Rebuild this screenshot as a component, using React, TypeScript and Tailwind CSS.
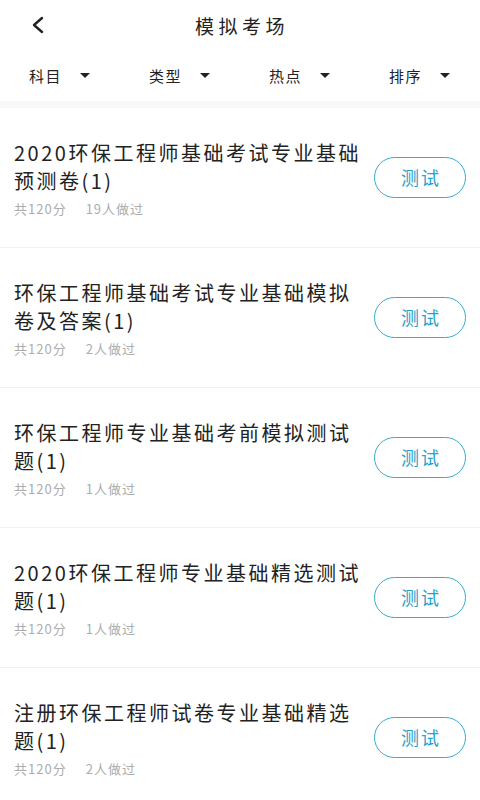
import React from "react";

const items = [
  { title: "2020环保工程师基础考试专业基础预测卷(1)", n: 19 },
  { title: "环保工程师基础考试专业基础模拟卷及答案(1)", n: 2 },
  { title: "环保工程师专业基础考前模拟测试题(1)", n: 1 },
  { title: "2020环保工程师专业基础精选测试题(1)", n: 1 },
  { title: "注册环保工程师试卷专业基础精选题(1)", n: 2 },
];

const filters = ["科目", "类型", "热点", "排序"];

export default function App() {
  return (
    <div
      className="w-[480px] h-[800px] bg-white overflow-hidden text-[#222]"
      style={{ fontFamily: '"Noto Sans CJK SC", "Noto Sans", sans-serif' }}
    >
      <div className="relative h-[50px] flex items-center justify-center">
        <svg
          className="absolute left-[31px] top-[16px]"
          width="14"
          height="18"
          viewBox="0 0 14 18"
          fill="none"
          stroke="#222"
          strokeWidth="2.4"
          strokeLinecap="round"
          strokeLinejoin="round"
        >
          <path d="M11 2 L3 9 L11 16" />
        </svg>
        <div className="text-[19px] tracking-[4.5px] pl-[4px] leading-none">模拟考场</div>
      </div>
      <div className="h-[51px] grid grid-cols-4">
        {filters.map((f) => (
          <div key={f} className="flex items-center pl-[29px]">
            <span className="text-[15px] tracking-[1.5px] leading-none">{f}</span>
            <svg className="ml-[18px]" width="10" height="5" viewBox="0 0 10 5">
              <path d="M0 0 L10 0 L5 5 Z" fill="#222" />
            </svg>
          </div>
        ))}
      </div>
      <div className="h-[7px] bg-[#f8f8f8]" />
      {items.map((it, i) => (
        <div
          key={i}
          className="h-[140px] flex items-center border-b border-[#f3f3f3] pl-[14px] pr-[14px]"
        >
          <div className="flex-1 min-w-0">
            <div className="text-[20px] tracking-[2.5px] leading-[28px] text-[#222] w-[350px]">
              {it.title}
            </div>
            <div className="mt-[6px] flex text-[13px] leading-[16px] text-[#adadad] tracking-[1px]">
              <span>共120分</span>
              <span className="ml-[19px]">{it.n}人做过</span>
            </div>
          </div>
          <div className="w-[92px] h-[41px] rounded-full border-[1.5px] border-[#3aa9cb] flex items-center justify-center text-[18px] tracking-[2px] pl-[2px] text-[#2aa0c8]">
            测试
          </div>
        </div>
      ))}
    </div>
  );
}
